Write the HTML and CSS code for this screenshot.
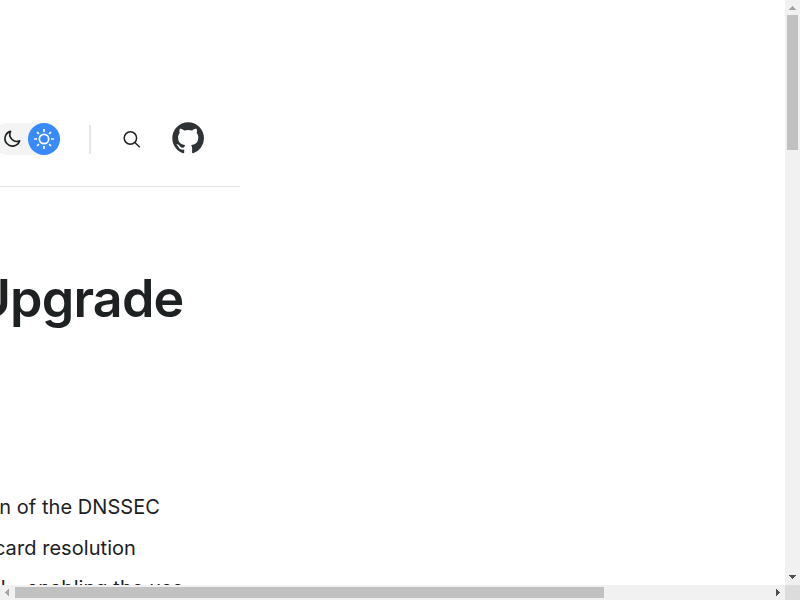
FILE: index.html
```html
<!DOCTYPE html>
<html lang="en">
<head>
<meta charset="utf-8">
<title>Upgrade</title>
<link rel="stylesheet" href="styles.css">
</head>
<body>
<div class="window">
  <div class="viewport">
    <header class="header">
      <div class="theme-toggle">
        <svg class="moon" width="18" height="18" viewBox="0 0 24 24" fill="none" stroke="#1d2122" stroke-width="2.2" stroke-linejoin="round"><path d="M10 1.8A10 10 0 1 0 22.2 14.4 9.4 9.4 0 0 1 10 1.8Z"/></svg>
        <span class="knob"><svg width="22" height="22" viewBox="0 0 22 22" fill="none" stroke="#fff" stroke-width="1.7"><circle cx="11" cy="11" r="4.7"/><path d="M11 1v3M11 18v3M1 11h3M18 11h3M4 4L5.9 5.9M16.1 16.1L18 18M4 18L5.9 16.1M16.1 5.9L18 4"/></svg></span>
      </div>
      <span class="divider"></span>
      <svg class="search" width="20" height="20" viewBox="0 0 20 20" fill="none" stroke="#1d2122" stroke-width="1.5"><circle cx="8.4" cy="9" r="6.2"/><path d="M12.9 13.5L17.8 18.3"/></svg>
      <svg class="github" width="32" height="32" viewBox="-.15 -.15 16.15 16.15" fill="#2f3335"><path d="M8 0C3.58 0 0 3.58 0 8c0 3.54 2.29 6.53 5.47 7.59.4.07.55-.17.55-.38 0-.19-.01-.82-.01-1.49-2.01.37-2.53-.49-2.69-.94-.09-.23-.48-.94-.82-1.13-.28-.15-.68-.52-.01-.53.63-.01 1.08.58 1.23.82.72 1.21 1.87.87 2.33.66.07-.52.28-.87.51-1.07-1.78-.2-3.64-.89-3.64-3.95 0-.87.31-1.59.82-2.15-.08-.2-.36-1.02.08-2.12 0 0 .67-.21 2.2.82.64-.18 1.32-.27 2-.27s1.36.09 2 .27c1.53-1.04 2.2-.82 2.2-.82.44 1.1.16 1.92.08 2.12.51.56.82 1.27.82 2.15 0 3.07-1.87 3.75-3.65 3.95.29.25.54.73.54 1.48 0 1.07-.01 1.93-.01 2.2 0 .21.15.46.55.38A8.01 8.01 0 0 0 16 8c0-4.42-3.58-8-8-8Z"/></svg>
    </header>
    <h1 class="title">Upgrade</h1>
    <div class="copy">
      <p class="line line-a">n of the DNSSEC</p>
      <p class="line line-b">card resolution</p>
      <p class="line line-c">l-, enabling the use</p>
    </div>
  </div>
  <div class="bar bar-y">
    <svg width="15" height="15" fill="#a3a3a3" shape-rendering="crispEdges"><path d="M7 6h1v1h1v1h1v1h1v1H4V9h1V8h1V7h1z"/></svg>
    <span class="thumb-y"></span>
    <svg class="end" width="15" height="15" fill="#505050" shape-rendering="crispEdges"><path d="M4 5h7v1h-1v1H9v1H8v1H7V8H6V7H5V6H4z"/></svg>
  </div>
  <div class="bar bar-x">
    <svg width="15" height="15" fill="#a3a3a3" shape-rendering="crispEdges"><path d="M9 4v7H8v-1H7V9H6V8H5V7h1V6h1V5h1V4z"/></svg>
    <span class="thumb-x"></span>
    <svg class="end" width="15" height="15" fill="#505050" shape-rendering="crispEdges"><path d="M6 4v7h1v-1h1V9h1V8h1V7H9V6H8V5H7V4z"/></svg>
  </div>
  <div class="corner"></div>
</div>
</body>
</html>
```
FILE: styles.css
```css
* { box-sizing: border-box; }
body { margin: 0; background: #fff; color: #1d2122; font-family: Inter, sans-serif; overflow: hidden; }
.window { display: grid; grid-template: 585px 15px / 785px 15px; width: 800px; height: 600px; }
.viewport { overflow: hidden; }
.header { display: flex; align-items: center; width: 240px; height: 187px; padding-top: 92px; border-bottom: 1px solid #e8e8e8; }
.theme-toggle { display: flex; align-items: center; width: 68px; height: 32px; margin-left: -8px; padding-left: 11px; border-radius: 16px; background: #f4f4f4; }
.moon { flex: none; }
.knob { display: flex; align-items: center; justify-content: center; width: 32px; height: 32px; margin-left: auto; border-radius: 50%; background: #3a8aff; }
.divider { width: 2px; height: 29px; margin-left: 29px; background: #e6e6e6; }
.search { margin-left: 31px; }
.github { margin: -2px 0 0 30px; }
.title { display: flex; justify-content: flex-end; width: 183.5px; margin: 81px 0 0; font-size: 52px; line-height: 62px; font-weight: 600; letter-spacing: -0.8px; }
.copy { margin-top: 157px; }
.line { display: flex; justify-content: flex-end; margin: 0; font-size: 20px; line-height: 40.6px; font-weight: 400; letter-spacing: 0.06px; white-space: nowrap; }
.line-a { width: 160px; }
.line-b { width: 136px; }
.line-c { width: 183.5px; }
.bar { display: flex; background: #f1f1f1; }
.bar-y { flex-direction: column; align-items: center; }
.bar-x { align-items: center; }
.thumb-y { width: 11px; height: 135px; background: #c1c1c1; }
.thumb-x { width: 589px; height: 11px; background: #c1c1c1; }
.bar-y .end { margin-top: auto; }
.bar-x .end { margin-left: auto; }
.corner { background: #dcdcdc; }
```
